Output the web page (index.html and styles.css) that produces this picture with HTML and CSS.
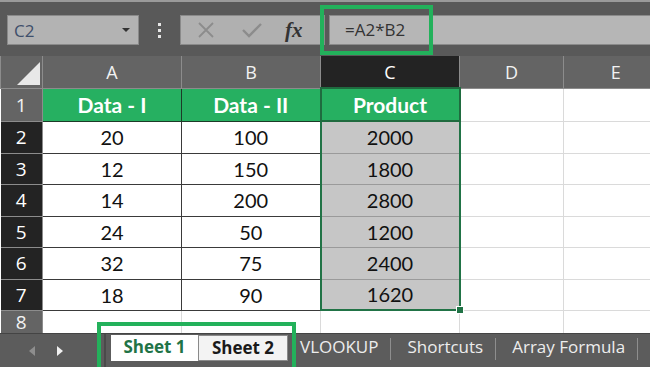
FILE: index.html
```html
<!DOCTYPE html>
<html lang="en">
<head>
    <meta charset="UTF-8">
    <meta name="viewport" content="width=device-width, initial-scale=1.0">
    <title>Product Formula</title>
    <link rel="stylesheet" href="styles.css">
</head>
<body>
    <div class="app">
        <div class="formula-bar">
            <div class="name-box">
                <span>C2</span>
                <span class="caret"></span>
            </div>
            <div class="grip"><i></i><i></i><i></i></div>
            <div class="buttons">
                <svg class="btn-icon" width="18" height="18" viewBox="0 0 18 18">
                    <path d="M2 2 L16 16 M16 2 L2 16" stroke="#8c8c8c" stroke-width="1.8" fill="none"/>
                </svg>
                <svg class="btn-icon" width="22" height="18" viewBox="0 0 22 18">
                    <path d="M2 9 L8 15 L20 3" stroke="#8c8c8c" stroke-width="2.4" fill="none"/>
                </svg>
                <span class="fx">fx</span>
            </div>
            <div class="formula-input">=A2*B2</div>
        </div>

        <div class="grid-wrap">
            <table class="sheet">
                <colgroup>
                    <col class="c-head">
                    <col class="c-data">
                    <col class="c-data">
                    <col class="c-data">
                    <col class="c-extra">
                    <col class="c-extra">
                </colgroup>
                <tr class="r-head">
                    <th class="corner"><span class="tri"></span></th>
                    <th>A</th>
                    <th>B</th>
                    <th class="active-col">C</th>
                    <th>D</th>
                    <th>E</th>
                </tr>
                <tr class="r-top">
                    <th class="rh">1</th>
                    <td class="hd">Data - I</td>
                    <td class="hd">Data - II</td>
                    <td class="hd hd-sel">Product</td>
                    <td class="blank"></td>
                    <td class="blank"></td>
                </tr>
                <tr class="r-a">
                    <th class="rh on">2</th>
                    <td class="val">20</td>
                    <td class="val">100</td>
                    <td class="val sel">2000</td>
                    <td class="blank"></td>
                    <td class="blank"></td>
                </tr>
                <tr class="r-b">
                    <th class="rh on">3</th>
                    <td class="val">12</td>
                    <td class="val">150</td>
                    <td class="val sel">1800</td>
                    <td class="blank"></td>
                    <td class="blank"></td>
                </tr>
                <tr class="r-a">
                    <th class="rh on">4</th>
                    <td class="val">14</td>
                    <td class="val">200</td>
                    <td class="val sel">2800</td>
                    <td class="blank"></td>
                    <td class="blank"></td>
                </tr>
                <tr class="r-b">
                    <th class="rh on">5</th>
                    <td class="val">24</td>
                    <td class="val">50</td>
                    <td class="val sel">1200</td>
                    <td class="blank"></td>
                    <td class="blank"></td>
                </tr>
                <tr class="r-a">
                    <th class="rh on">6</th>
                    <td class="val">32</td>
                    <td class="val">75</td>
                    <td class="val sel">2400</td>
                    <td class="blank"></td>
                    <td class="blank"></td>
                </tr>
                <tr class="r-b">
                    <th class="rh on">7</th>
                    <td class="val">18</td>
                    <td class="val">90</td>
                    <td class="val sel sel-last">1620<span class="handle"></span></td>
                    <td class="blank"></td>
                    <td class="blank"></td>
                </tr>
                <tr class="r-last">
                    <th class="rh">8</th>
                    <td class="blank"></td>
                    <td class="blank"></td>
                    <td class="blank"></td>
                    <td class="blank"></td>
                    <td class="blank"></td>
                </tr>
            </table>
        </div>

        <div class="tabs">
            <div class="nav">
                <span class="arrow-left"></span>
                <span class="arrow-right"></span>
            </div>
            <div class="tab-strip">
                <span class="tab tab-active">Sheet 1</span>
                <span class="tab tab-open">Sheet 2</span>
                <span class="tab">VLOOKUP</span>
                <span class="sep"></span>
                <span class="tab">Shortcuts</span>
                <span class="sep"></span>
                <span class="tab">Array Formula</span>
                <span class="sep"></span>
            </div>
        </div>

        <div class="callout callout-formula"></div>
        <div class="callout callout-tabs"></div>
    </div>
</body>
</html>
```

FILE: styles.css
```css
* {
    box-sizing: border-box;
}
body {
    margin: 0;
    width: 650px;
    height: 367px;
    overflow: hidden;
    background-color: #5a5a5a;
    font-family: 'Open Sans', 'Noto Sans', sans-serif;
}
.app {
    position: relative;
    width: 650px;
    height: 367px;
    display: flex;
    flex-direction: column;
}

/* formula bar */
.formula-bar {
    height: 56px;
    flex: none;
    display: flex;
    align-items: flex-start;
    padding: 15px 0 0 7px;
    background-color: #595959;
    border-top: 2px solid #9a9a9a;
}
.formula-bar > div {
    height: 30px;
}
.name-box {
    margin-top: -2px;
    width: 132px;
    background-color: #b3b3b3;
    border: 1px solid #8a8a8a;
    display: flex;
    align-items: center;
    justify-content: space-between;
    padding: 0 8px 0 6px;
    color: #3f4f6b;
    font-size: 17px;
}
.caret {
    width: 0;
    height: 0;
    border-left: 4px solid transparent;
    border-right: 4px solid transparent;
    border-top: 4px solid #333;
}
.grip {
    margin-top: -2px;
    width: 41px;
    display: flex;
    flex-direction: column;
    align-items: center;
    justify-content: center;
    gap: 3px;
}
.grip i {
    display: block;
    width: 3px;
    height: 3px;
    background-color: #e6e6e6;
}
.buttons {
    margin-top: -2px;
    width: 145px;
    background-color: #b0b0b0;
    border: 1px solid #8a8a8a;
    display: flex;
    align-items: center;
    padding-left: 16px;
}
.btn-icon {
    margin-right: 26px;
}
.btn-icon + .btn-icon {
    margin-right: 22px;
}
.fx {
    font-family: 'Liberation Serif', serif;
    font-style: italic;
    font-weight: bold;
    font-size: 21px;
    color: #333;
}
.formula-input {
    margin-top: -2px;
    margin-left: 4px;
    flex: 1;
    background-color: #b6b6b6;
    border: 1px solid #8a8a8a;
    border-right: none;
    padding: 2px 0 0 15px;
    font-size: 17px;
    color: #333;
}

/* grid */
.grid-wrap {
    height: 277px;
    flex: none;
    overflow: hidden;
    background-color: #fff;
}
.sheet {
    width: 667px;
    table-layout: fixed;
    border-collapse: collapse;
    font-family: 'Lato', 'Noto Sans', sans-serif;
}
.c-head { width: 42px; }
.c-data { width: 139px; }
.c-extra { width: 104px; }
.sheet th,
.sheet td {
    padding: 0;
    text-align: center;
}
.r-head { height: 32px; }
.r-top { height: 33px; }
.r-a { height: 32px; }
.r-b { height: 31px; }
.r-last { height: 23px; }
.r-last th {
    line-height: 22px;
    vertical-align: middle;
}
.r-head th {
    background-color: #646464;
    color: #f2f2f2;
    font-family: 'Open Sans', sans-serif;
    font-weight: normal;
    font-size: 18px;
    border-left: 1px solid #8c8c8c;
    border-bottom: 1px solid #8c8c8c;
}
.r-head th.active-col {
    background-color: #232323;
    color: #fff;
}
.corner {
    position: relative;
}
.tri {
    position: absolute;
    right: 2px;
    bottom: 3px;
    width: 0;
    height: 0;
    border-left: 23px solid transparent;
    border-bottom: 23px solid #e8e8e8;
}
.rh {
    background-color: #646464;
    color: #f2f2f2;
    font-family: 'Open Sans', sans-serif;
    font-weight: normal;
    font-size: 19px;
    border-bottom: 1px solid #8c8c8c;
    border-right: 1px solid #8c8c8c;
}
.rh.on {
    background-color: #232323;
    color: #fff;
}
.hd {
    background-color: #26b061;
    color: #fff;
    font-weight: bold;
    font-size: 21px;
    border: 1px solid #1d3a28;
}
.hd-sel {
    border: 2px solid #1f6b3f;
}
.val {
    color: #111;
    font-size: 20px;
    border: 1px solid #3a3a3a;
    background-color: #fff;
}
.val.sel {
    background-color: #c6c6c6;
    border-left: 2px solid #217346;
    border-right: 2px solid #217346;
    border-top: 1px solid #9a9a9a;
    border-bottom: 1px solid #9a9a9a;
}
.val.sel-last {
    position: relative;
    border-bottom: 2px solid #217346;
}
.handle {
    position: absolute;
    right: -5px;
    bottom: -5px;
    width: 8px;
    height: 8px;
    background-color: #217346;
    border: 1px solid #fff;
}
.blank {
    border: 1px solid #dadada;
}

/* sheet tabs */
.tabs {
    flex: 1;
    display: flex;
    background-color: #5c5c5c;
    border-top: 1px solid #444;
}
.nav {
    width: 104px;
    display: flex;
    align-items: center;
    padding-left: 29px;
    gap: 22px;
}
.arrow-left {
    width: 0;
    height: 0;
    border-top: 5px solid transparent;
    border-bottom: 5px solid transparent;
    border-right: 6px solid #8e8e8e;
}
.arrow-right {
    width: 0;
    height: 0;
    border-top: 5px solid transparent;
    border-bottom: 5px solid transparent;
    border-left: 6px solid #f0f0f0;
}
.tab-strip {
    display: flex;
    align-items: flex-start;
    padding-left: 5px;
    border-left: 2px solid #4a4a4a;
}
.tab {
    height: 26px;
    padding: 0 12px;
    font-size: 17px;
    line-height: 23px;
    color: #ededed;
    margin-top: 1px;
}
.tab-active {
    width: 87px;
    background-color: #fff;
    color: #217346;
    font-weight: bold;
    text-align: center;
    padding: 0;
}
.tab-open {
    width: 90px;
    background-color: #f3f3f3;
    border: 1px solid #8a8a8a;
    color: #1a1a1a;
    font-weight: bold;
    text-align: center;
    padding: 0;
}
.tab-open + .tab {
    padding-left: 12px;
}
.sep {
    width: 1px;
    height: 22px;
    margin-top: 4px;
    margin-right: 4px;
    background-color: #8e8e8e;
}

/* green annotation boxes */
.callout {
    position: absolute;
    border: 4px solid #23b15b;
}
.callout-formula {
    left: 320px;
    top: 5px;
    width: 113px;
    height: 50px;
}
.callout-tabs {
    left: 97px;
    top: 322px;
    width: 199px;
    height: 50px;
}
```
